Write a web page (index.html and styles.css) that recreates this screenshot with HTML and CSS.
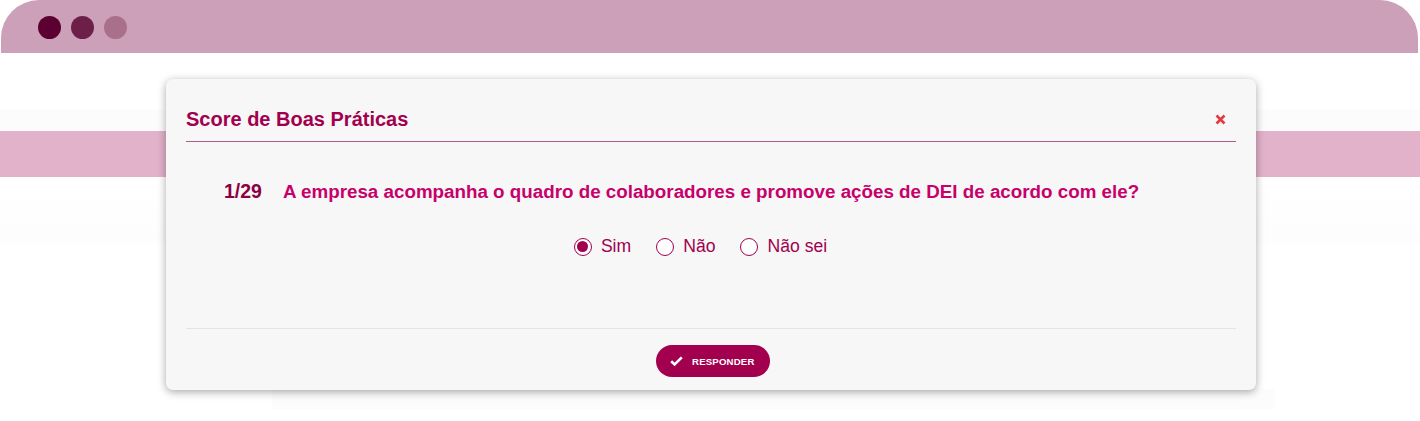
FILE: index.html
```html
<!DOCTYPE html>
<html lang="pt">
<head>
<meta charset="utf-8">
<title>Score de Boas Práticas</title>
<link rel="stylesheet" href="styles.css">
</head>
<body>
<div class="window">
  <div class="titlebar">
    <span class="dot d1"></span>
    <span class="dot d2"></span>
    <span class="dot d3"></span>
  </div>
  <div class="page">
    <div class="backdrop">
      <div class="faint-row top"></div>
      <div class="band"></div>
      <div class="faint-row bottom"></div>
    </div>
    <div class="panel-ghost"></div>
  </div>

  <div class="modal">
    <div class="modal-header">
      <h2 class="modal-title">Score de Boas Práticas</h2>
      <button class="close" aria-label="Fechar">
        <svg width="11" height="11" viewBox="0 0 11 11"><path d="M1.5 1.5 L9.5 9.5 M9.5 1.5 L1.5 9.5" stroke="#e13a40" stroke-width="2.6" stroke-linecap="butt"/></svg>
      </button>
    </div>
    <div class="modal-body">
      <div class="question">
        <span class="q-num">1/29</span>
        <span class="q-text">A empresa acompanha o quadro de colaboradores e promove ações de DEI de acordo com ele?</span>
      </div>
      <div class="options">
        <label class="opt"><span class="radio checked"></span>Sim</label>
        <label class="opt"><span class="radio"></span>Não</label>
        <label class="opt"><span class="radio"></span>Não sei</label>
      </div>
    </div>
    <div class="modal-footer">
      <button class="btn">
        <svg width="13" height="10" viewBox="0 0 13 10"><path d="M1.2 5.2 L4.6 8.4 L11.8 1.4" fill="none" stroke="#ffffff" stroke-width="2.6"/></svg>
        <span>RESPONDER</span>
      </button>
    </div>
  </div>
</div>
</body>
</html>
```

FILE: styles.css
```css
* { box-sizing: border-box; }
html, body { margin: 0; padding: 0; background: #ffffff; }
body {
  font-family: "Liberation Sans", Arial, sans-serif;
  width: 1420px;
  height: 421px;
  overflow: hidden;
}
.window {
  position: relative;
  width: 1420px;
  height: 421px;
}
.titlebar {
  margin-left: 1px;
  width: 1417px;
  height: 53px;
  background: #cca0b8;
  border-radius: 38px 38px 0 0;
  display: flex;
  align-items: center;
  padding-left: 37px;
  gap: 10px;
}
.dot {
  width: 23px;
  height: 23px;
  border-radius: 50%;
  margin-top: 1px;
}
.d1 { background: #5b0030; }
.d2 { background: #6c2049; }
.d3 { background: #a9708b; }

.page {
  position: relative;
  height: 368px;
}
.backdrop {
  padding-top: 57px;
}
.faint-row.top {
  height: 21px;
  background: #fcfcfc;
}
.band {
  height: 46px;
  background: #e2b1ca;
}
.faint-row.bottom {
  height: 66px;
  background: linear-gradient(#ffffff, #fdfdfd);
}
.panel-ghost {
  position: absolute;
  left: 272px;
  top: 336px;
  width: 1002px;
  height: 20px;
  background: #fcfcfc;
}

.modal {
  position: absolute;
  left: 166px;
  top: 79px;
  width: 1090px;
  height: 311px;
  background: #f7f7f7;
  border-radius: 7px;
  box-shadow: 0 2px 8px rgba(0,0,0,0.35);
  padding: 0 20px;
  display: flex;
  flex-direction: column;
}
.modal-header {
  display: flex;
  align-items: center;
  justify-content: space-between;
  height: 63px;
  padding-top: 19px;
  border-bottom: 1px solid #ad5e86;
}
.modal-title {
  margin: 0;
  font-size: 20px;
  font-weight: bold;
  color: #a2004f;
}
.close {
  border: 0;
  background: none;
  padding: 0;
  margin-right: 10px;
  margin-top: 0;
  display: flex;
}
.modal-body {
  height: 187px;
  border-bottom: 1px solid #e4e4e4;
  padding-top: 38px;
}
.question {
  display: flex;
  align-items: baseline;
  gap: 21px;
  padding-left: 38px;
  font-weight: bold;
}
.q-num {
  font-size: 19.5px;
  color: #8d0044;
}
.q-text {
  font-size: 18.8px;
  color: #c7006b;
}
.options {
  display: flex;
  justify-content: center;
  gap: 25px;
  margin-top: 33px;
  padding-right: 21px;
}
.opt {
  display: flex;
  align-items: center;
  gap: 9px;
  font-size: 17.6px;
  color: #a0004f;
}
.radio {
  width: 18px;
  height: 18px;
  border-radius: 50%;
  border: 1.5px solid #a0004f;
  background: #ffffff;
  position: relative;
}
.radio.checked::after {
  content: "";
  position: absolute;
  left: 2px;
  top: 2px;
  width: 11px;
  height: 11px;
  border-radius: 50%;
  background: #a0004f;
}
.modal-footer {
  display: flex;
  justify-content: center;
  padding-top: 16px;
  padding-left: 4px;
}
.btn {
  display: flex;
  align-items: center;
  gap: 9px;
  height: 32px;
  width: 114px;
  padding: 0 0 0 14px;
  border: 0;
  border-radius: 16px;
  background: #a2004f;
  color: #ffffff;
  font-family: "Liberation Sans", Arial, sans-serif;
  font-size: 9.6px;
  font-weight: bold;
  letter-spacing: 0.2px;
}
```
